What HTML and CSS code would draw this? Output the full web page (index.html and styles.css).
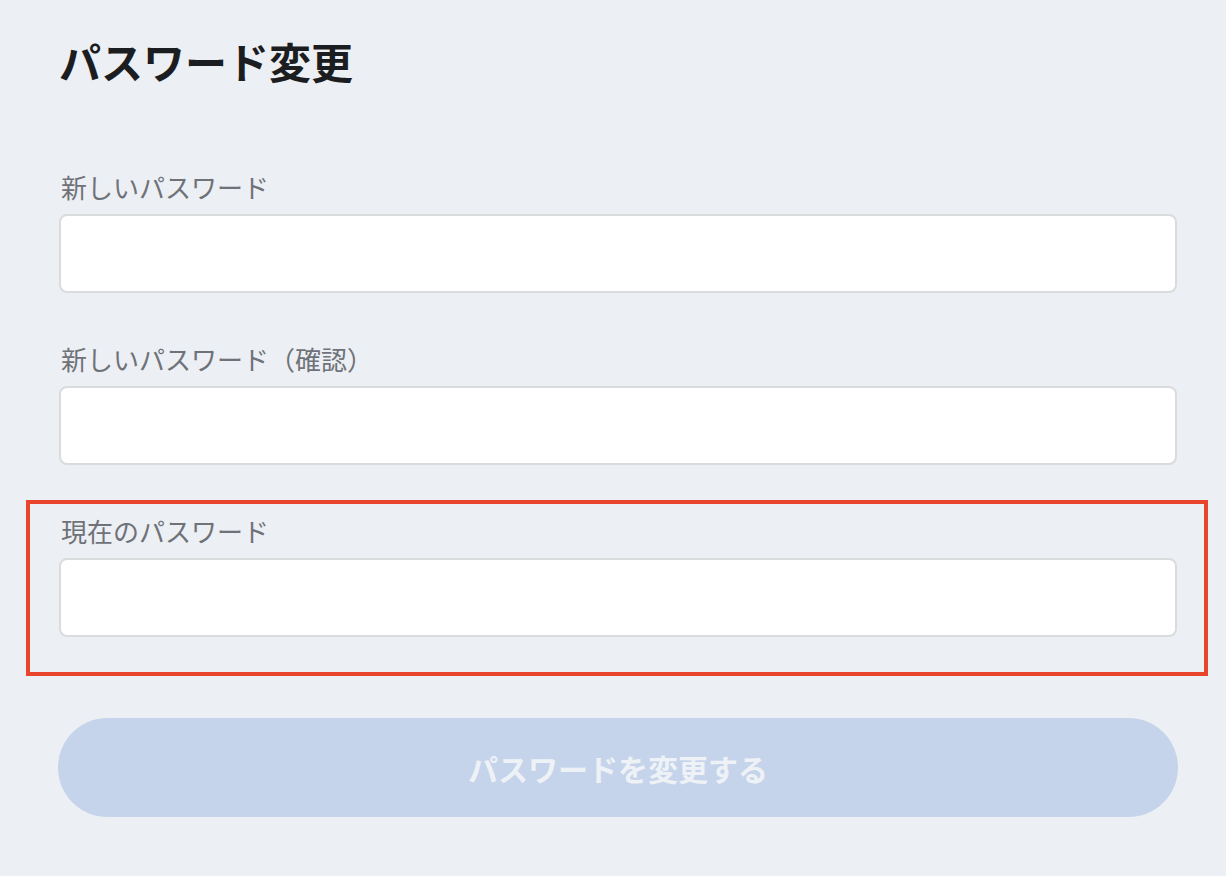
FILE: index.html
```html
<!DOCTYPE html>
<html lang="ja">

<head>
  <meta charset="UTF-8">
  <meta name="viewport" content="width=device-width, initial-scale=1.0">
  <title>パスワード変更</title>
  <link rel="stylesheet" href="styles.css">
</head>

<body>
  <main class="page">
    <h1 class="page-title">パスワード変更</h1>

    <form class="password-form">
      <div class="field">
        <label class="field-label" for="new-password">新しいパスワード</label>
        <input class="field-input" id="new-password" type="password">
      </div>
      <div class="field">
        <label class="field-label" for="confirm-password">新しいパスワード（確認）</label>
        <input class="field-input" id="confirm-password" type="password">
      </div>
      <!-- 注目枠 -->
      <div class="field field-highlight">
        <label class="field-label" for="current-password">現在のパスワード</label>
        <input class="field-input" id="current-password" type="password">
      </div>
      <button class="submit-button" type="submit" disabled>パスワードを変更する</button>
    </form>
  </main>
</body>

</html>
```

FILE: styles.css
```css
body {
  margin: 0;
  background: #eceff4;
  font-family: "Noto Sans CJK JP", "Noto Sans", sans-serif;
  color: #1b1d21;
}

.page {
  padding: 36px 49px 0 59px;
}

.page-title {
  margin: 0;
  font-size: 42px;
  line-height: 50px;
  font-weight: 700;
  color: #1b1d21;
}

.password-form {
  display: flex;
  flex-direction: column;
  margin-top: 83px;
}

.field {
  display: flex;
  flex-direction: column;
  margin-bottom: 48px;
}

.field-label {
  font-size: 26px;
  line-height: 36px;
  color: #6f7278;
  margin-bottom: 9px;
  padding-left: 2px;
}

.field-input {
  box-sizing: border-box;
  height: 79px;
  width: 100%;
  background: #fff;
  border: 2px solid #dadbdd;
  border-radius: 8px;
  font-size: 26px;
  padding: 0 16px;
  outline: none;
}

/* Roter Hinweisrahmen um das letzte Feld */
.field-highlight {
  border: 4px solid #e9442c;
  margin: -13px -31px 42px -33px;
  padding: 9px 27px 35px 29px;
}

.submit-button {
  height: 99px;
  margin: 0 -1px;
  border: none;
  border-radius: 50px;
  background: #c5d4ea;
  color: #eef2f7;
  font-family: inherit;
  font-size: 30px;
  font-weight: 700;
}
```
